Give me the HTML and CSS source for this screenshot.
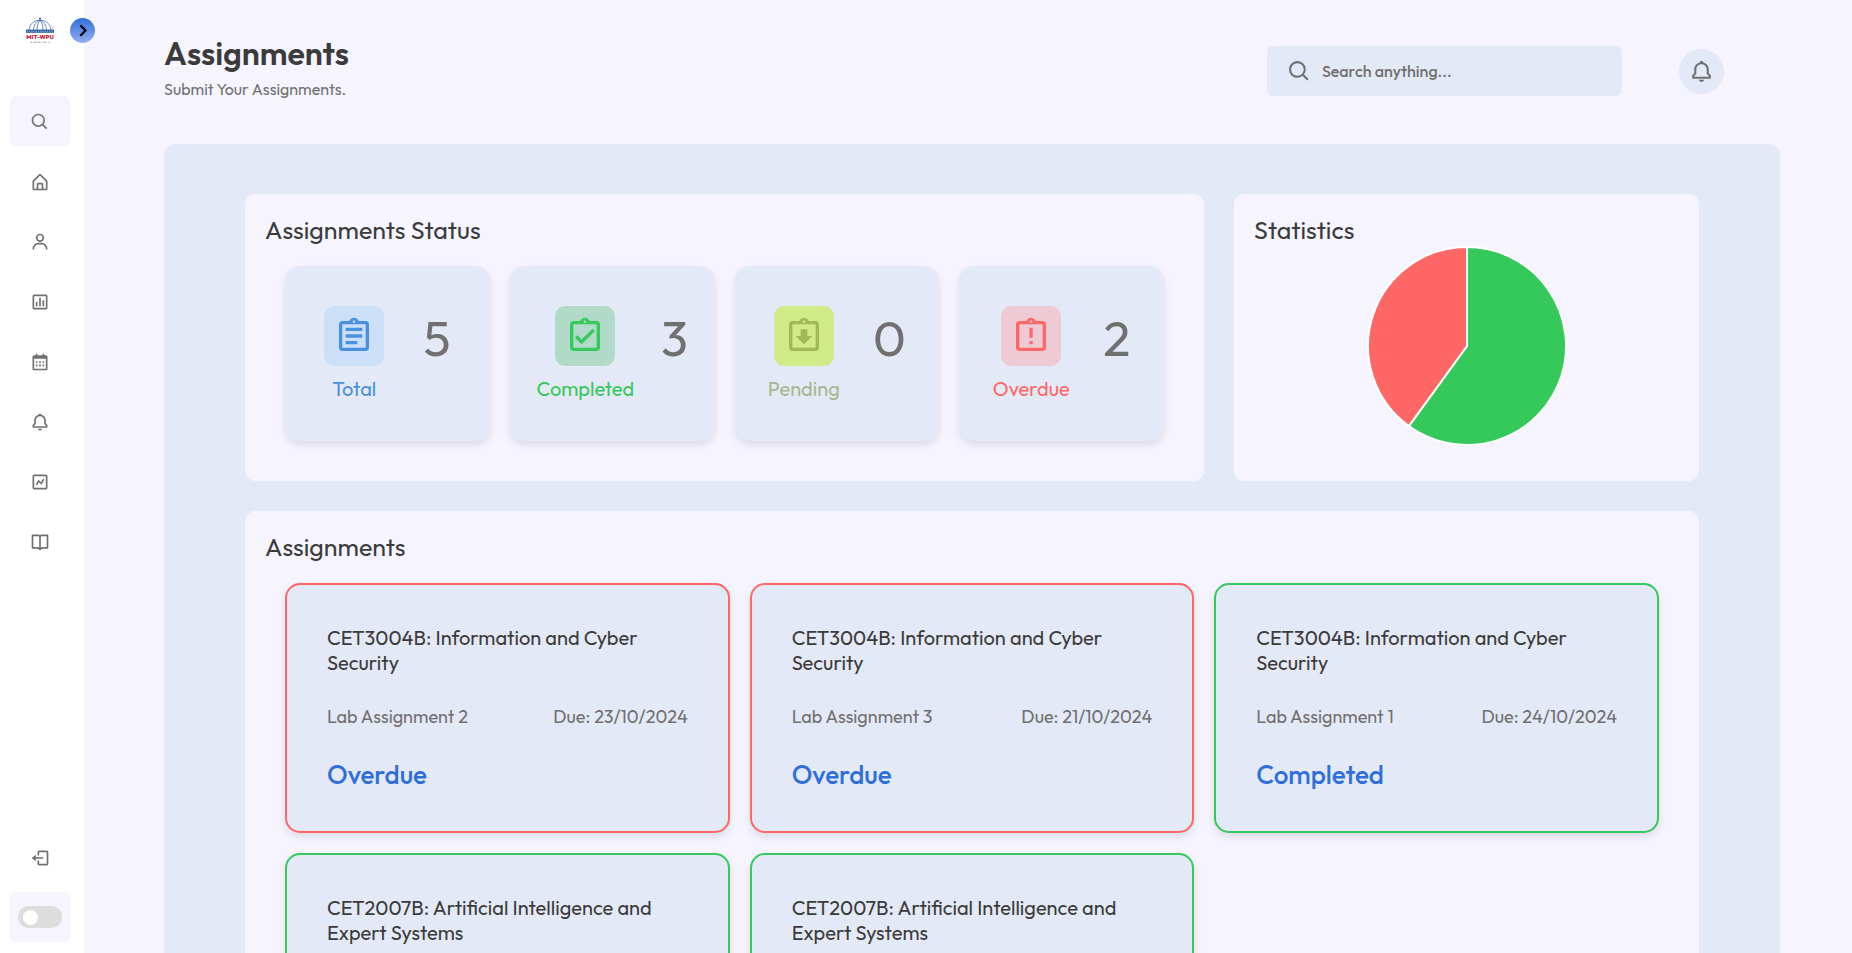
FILE: index.html
```html
<!DOCTYPE html>
<html lang="en">
<head>
<meta charset="utf-8">
<title>Assignments</title>
<link rel="stylesheet" href="styles.css">
</head>
<body>
<svg class="sprite" aria-hidden="true">
  <symbol id="search" viewBox="0 0 24 24"><path d="M10 18a7.952 7.952 0 0 0 4.897-1.688l4.396 4.396 1.414-1.414-4.396-4.396A7.952 7.952 0 0 0 18 10c0-4.411-3.589-8-8-8s-8 3.589-8 8 3.589 8 8 8zm0-14c3.309 0 6 2.691 6 6s-2.691 6-6 6-6-2.691-6-6 2.691-6 6-6z"/></symbol>
  <symbol id="home" viewBox="0 0 24 24"><path d="M5 22h14a2 2 0 0 0 2-2v-9a1 1 0 0 0-.29-.71l-8-8a1 1 0 0 0-1.41 0l-8 8A1 1 0 0 0 3 11v9a2 2 0 0 0 2 2zm5-2v-5h4v5zm-5-8.59 7-7 7 7V20h-3v-5a2 2 0 0 0-2-2h-4a2 2 0 0 0-2 2v5H5z"/></symbol>
  <symbol id="user" viewBox="0 0 24 24"><path d="M12 2a5 5 0 1 0 5 5 5 5 0 0 0-5-5zm0 8a3 3 0 1 1 3-3 3 3 0 0 1-3 3zm9 11v-1a7 7 0 0 0-7-7h-4a7 7 0 0 0-7 7v1h2v-1a5 5 0 0 1 5-5h4a5 5 0 0 1 5 5v1z"/></symbol>
  <symbol id="bars" viewBox="0 0 24 24"><path d="M5 3a2 2 0 0 0-2 2v14a2 2 0 0 0 2 2h14a2 2 0 0 0 2-2V5a2 2 0 0 0-2-2zm0 2h14v14H5zM7 12h2v5H7zM11 7h2v10h-2zM15 10h2v7h-2z" fill-rule="evenodd"/></symbol>
  <symbol id="calendar" viewBox="0 0 24 24"><path d="M7 11h2v2H7zm0 4h2v2H7zm4-4h2v2h-2zm0 4h2v2h-2zm4-4h2v2h-2zm0 4h2v2h-2z"/><path d="M5 22h14c1.103 0 2-.897 2-2V6c0-1.103-.897-2-2-2h-2V2h-2v2H9V2H7v2H5c-1.103 0-2 .897-2 2v14c0 1.103.897 2 2 2zM19 8l.001 12H5V8h14z"/></symbol>
  <symbol id="bell" viewBox="0 0 24 24"><path d="M19 13.586V10c0-3.217-2.185-5.927-5.145-6.742C13.562 2.52 12.846 2 12 2s-1.562.52-1.855 1.258C7.185 4.074 5 6.783 5 10v3.586l-1.707 1.707A.996.996 0 0 0 3 16v2a1 1 0 0 0 1 1h16a1 1 0 0 0 1-1v-2a.996.996 0 0 0-.293-.707L19 13.586zM19 17H5v-.586l1.707-1.707A.996.996 0 0 0 7 14v-4c0-2.757 2.243-5 5-5s5 2.243 5 5v4c0 .266.105.52.293.707L19 16.414V17zm-7 5a2.98 2.98 0 0 0 2.818-2H9.182A2.98 2.98 0 0 0 12 22z"/></symbol>
  <symbol id="trend" viewBox="0 0 24 24"><path d="M5 3a2 2 0 0 0-2 2v14a2 2 0 0 0 2 2h14a2 2 0 0 0 2-2V5a2 2 0 0 0-2-2zm0 2h14v14H5z" fill-rule="evenodd"/><path d="M7.700 15.400 10.300 10.800l3.300 3 2.800-5.200" fill="none" stroke="currentColor" stroke-width="2"/></symbol>
  <symbol id="book" viewBox="0 0 24 24"><path d="M21 3h-7a2.98 2.98 0 0 0-2 .78A2.98 2.98 0 0 0 10 3H3a1 1 0 0 0-1 1v15a1 1 0 0 0 1 1h5.758c.526 0 1.042.214 1.414.586l1.121 1.121a1 1 0 0 0 1.414 0l1.121-1.121A2.015 2.015 0 0 1 15.242 20H21a1 1 0 0 0 1-1V4a1 1 0 0 0-1-1zM8.758 18H4V5h6a1 1 0 0 1 1 1v12.689A4.033 4.033 0 0 0 8.758 18zM20 18h-4.758c-.799 0-1.584.246-2.242.689V6a1 1 0 0 1 1-1h6z"/></symbol>
  <symbol id="logout" viewBox="0 0 24 24"><path d="M16 13v-2H7V8l-5 4 5 4v-3z"/><path d="M20 3h-9c-1.103 0-2 .897-2 2v4h2V5h9v14h-9v-4H9v4c0 1.103.897 2 2 2h9c1.103 0 2-.897 2-2V5c0-1.103-.897-2-2-2z"/></symbol>
  <symbol id="clipboard" viewBox="0 0 24 24"><path d="M19 3h-4.180C14.4 1.840 13.300 1 12 1c-1.300 0-2.400.84-2.820 2H5c-1.100 0-2 .9-2 2v14c0 1.100.9 2 2 2h14c1.100 0 2-.9 2-2V5c0-1.100-.9-2-2-2zm-7-.25c.41 0 .75.34.75.75s-.34.75-.75.75-.75-.34-.75-.75.340-.75.750-.75zM19 19H5V5h14v14z"/></symbol>
</svg>

<aside class="sidebar">
  <div class="brand">
    <svg class="logo" viewBox="0 0 28 27">
      <g fill="none" stroke="#3f6fb0" stroke-width=".8">
        <path d="M3 13C4 6.500 8 3.300 14 3.300S24 6.500 25 13M7.500 13c.3-5 2.800-8.500 6.500-9.700M20.500 13c-.3-5-2.800-8.500-6.500-9.700M11 13c0-4 1-7.500 3-9.700 2 2.200 3 5.700 3 9.700M14 .3V3.500"/>
      </g>
      <path d="M0 12.600h28v3.200H0z" fill="#2f5f9f"/>
      <path d="M1 14.300h26" stroke="#b9cce6" stroke-width=".8" stroke-dasharray="1.200 1"/>
      <circle cx="14" cy="1.800" r="1" fill="#3f6fb0"/>
      <circle cx="27" cy="10.500" r=".8" fill="none" stroke="#8fa9cc" stroke-width=".5"/>
      <text x=".3" y="22" class="logo-name" textLength="27.400" lengthAdjust="spacingAndGlyphs">MIT-WPU</text>
      <path d="M4.500 25.200h1.500M7 25.200h8.500M17 25.200h4M22.500 25.200h1.500" stroke="#999" stroke-width="1" stroke-dasharray="1.500 .5"/>
    </svg>
    <button class="expand" aria-label="Expand">
      <svg viewBox="0 0 25 25"><path d="m10.300 7.300 5.200 5.200-5.200 5.200" fill="none" stroke="#000" stroke-width="2.200"/></svg>
    </button>
  </div>
  <nav class="menu">
    <a class="item item-search"><svg><use href="#search"/></svg></a>
    <a class="item"><svg><use href="#home"/></svg></a>
    <a class="item"><svg><use href="#user"/></svg></a>
    <a class="item"><svg><use href="#bars"/></svg></a>
    <a class="item"><svg><use href="#calendar"/></svg></a>
    <a class="item"><svg><use href="#bell"/></svg></a>
    <a class="item"><svg><use href="#trend"/></svg></a>
    <a class="item"><svg><use href="#book"/></svg></a>
  </nav>
  <a class="item"><svg><use href="#logout"/></svg></a>
  <div class="mode"><span class="switch"><span class="knob"></span></span></div>
</aside>

<main class="main">
  <header class="header">
    <div class="heading">
      <h1>Assignments</h1>
      <p>Submit Your Assignments.</p>
    </div>
    <div class="search"><svg><use href="#search"/></svg><span>Search anything...</span></div>
    <button class="notify" aria-label="Notifications"><svg><use href="#bell"/></svg></button>
  </header>

  <div class="board">
    <section class="card status">
      <h2>Assignments Status</h2>
      <div class="tiles">
        <div class="tile total">
          <div class="kind"><span class="badge"><svg><use href="#clipboard"/><path transform="scale(1.6667)" d="M7 15h7v2H7zm0-4h10v2H7zm0-4h10v2H7z"/></svg></span><span class="label">Total</span></div>
          <span class="count">5</span>
        </div>
        <div class="tile completed">
          <div class="kind"><span class="badge"><svg><use href="#clipboard"/><path transform="scale(1.6667)" d="M18 9l-1.410-1.420L10 14.170l-2.590-2.580L6 13l4 4z"/></svg></span><span class="label">Completed</span></div>
          <span class="count">3</span>
        </div>
        <div class="tile pending">
          <div class="kind"><span class="badge"><svg><use href="#clipboard"/><path transform="scale(1.6667)" d="M10 8h4v4h3l-5 5-5-5h3z"/></svg></span><span class="label">Pending</span></div>
          <span class="count">0</span>
        </div>
        <div class="tile overdue">
          <div class="kind"><span class="badge"><svg><use href="#clipboard"/><path transform="scale(1.6667)" d="M11 7h2v6h-2zM11 15h2v2h-2z"/></svg></span><span class="label">Overdue</span></div>
          <span class="count">2</span>
        </div>
      </div>
    </section>

    <section class="card stats">
      <h2>Statistics</h2>
      <svg class="pie" viewBox="-100 -100 200 200">
        <g stroke="#fff" stroke-width="2">
          <path d="M0 0V-99A99 99 0 1 1 -58.190 80.090z" fill="#35c85b"/>
          <path d="M0 0-58.190 80.090A99 99 0 0 1 0-99z" fill="#ff6767"/>
        </g>
      </svg>
    </section>

    <section class="card list">
      <h2>Assignments</h2>
      <div class="grid">
        <article class="task late">
          <h3>CET3004B: Information and Cyber Security</h3>
          <div class="meta"><span>Lab Assignment 2</span><span>Due: 23/10/2024</span></div>
          <strong>Overdue</strong>
        </article>
        <article class="task late">
          <h3>CET3004B: Information and Cyber Security</h3>
          <div class="meta"><span>Lab Assignment 3</span><span>Due: 21/10/2024</span></div>
          <strong>Overdue</strong>
        </article>
        <article class="task done">
          <h3>CET3004B: Information and Cyber Security</h3>
          <div class="meta"><span>Lab Assignment 1</span><span>Due: 24/10/2024</span></div>
          <strong>Completed</strong>
        </article>
        <article class="task done">
          <h3>CET2007B: Artificial Intelligence and Expert Systems</h3>
        </article>
        <article class="task done">
          <h3>CET2007B: Artificial Intelligence and Expert Systems</h3>
        </article>
      </div>
    </section>
  </div>
</main>
</body>
</html>
```
FILE: styles.css
```css
* { box-sizing: border-box; margin: 0; padding: 0; }

body {
  display: flex;
  height: 100vh;
  overflow: hidden;
  background: #f6f5ff;
  color: #3b3b3b;
  font-family: Outfit, Lato, sans-serif;
  font-weight: 400;
}

svg { display: block; fill: currentColor; }
button { border: 0; }
.sprite { position: absolute; width: 0; height: 0; }

.sidebar {
  display: flex;
  flex-direction: column;
  flex: none;
  width: 84px;
  height: 100vh;
  padding: 17px 14px 11px 10px;
  background: #fff;
  color: #707070;
}
.brand { position: relative; height: 79px; }
.logo { width: 28px; height: 27px; margin-left: 16px; }
.logo-name { fill: #c8203c; font: 800 6px Outfit, sans-serif; }
.expand {
  position: absolute;
  top: .5px;
  left: 60px;
  width: 25px;
  height: 25px;
  border-radius: 50%;
  background: linear-gradient(#2f6fdb, #93aeef);
}
.menu { flex: 1; }
.item {
  display: grid;
  place-items: center;
  height: 50px;
  margin-top: 10px;
  padding-top: 1px;
  border-radius: 6px;
}
.item svg { width: 20px; height: 20px; }
.item-search { margin-top: 0; background: #f6f5ff; }
.mode {
  display: grid;
  place-items: center;
  height: 50px;
  margin-top: 10px;
  border-radius: 6px;
  background: #f6f5ff;
}
.switch {
  display: flex;
  align-items: center;
  width: 44px;
  height: 22px;
  padding: 0 5px;
  border-radius: 11px;
  background: #ddd;
}
.knob { width: 15px; height: 15px; border-radius: 50%; background: #fff; }

.main { display: flex; flex-direction: column; flex: 1; padding: 0 72px 0 80px; }
.header { display: flex; flex: none; align-items: flex-start; height: 144px; padding: 33px 56px 0 0; }
.heading { flex: 1; }
.heading h1 { font-size: 32px; font-weight: 600; line-height: 40px; }
.heading p { margin-top: 6px; color: #707070; font-size: 16px; line-height: 20px; }
.search {
  display: flex;
  align-items: center;
  gap: 10px;
  width: 355px;
  height: 50px;
  margin: 13px 57px 0 0;
  padding-left: 20px;
  border-radius: 6px;
  background: #e4e9f7;
  color: #707070;
  font-size: 16px;
  font-weight: 500;
}
.search svg { width: 25px; height: 25px; }
.notify {
  display: grid;
  place-items: center;
  width: 45px;
  height: 45px;
  margin-top: 16px;
  border-radius: 50%;
  background: #e4e9f7;
  color: #707070;
}
.notify svg { width: 25px; height: 25px; }

.board {
  display: grid;
  grid-template-columns: 959px 465px;
  grid-template-rows: 287px 1fr;
  gap: 30px;
  flex: 1;
  min-height: 0;
  padding: 50px 81px 0;
  border-radius: 10px 10px 0 0;
  background: #e4e9f7;
}
.card { min-height: 0; padding: 21px 20px; border-radius: 10px; background: #f6f5ff; }
.card h2 { font-size: 25px; font-weight: 400; line-height: 30px; }
.list { grid-column: span 2; border-radius: 10px 10px 0 0; }

.tiles { display: grid; grid-template-columns: repeat(4, 1fr); gap: 20px; padding: 21px 20px 0; }
.tile {
  display: flex;
  justify-content: space-evenly;
  height: 175px;
  padding-top: 40px;
  border-radius: 15px;
  background: #e4e9f7;
  box-shadow: 0 4px 8px rgba(0, 0, 0, .1);
}
.kind { display: flex; flex-direction: column; align-items: center; gap: 10px; }
.badge { display: grid; place-items: center; width: 60px; height: 60px; border-radius: 10px; }
.badge svg { width: 40px; height: 40px; }
.label { font-size: 20px; line-height: 25px; }
.count { color: #707070; font-size: 50px; line-height: 63px; }
.total .kind { color: #4a90e2; }
.total .badge { background: #cbe0f8; }
.completed .kind { color: #35c85b; }
.completed .badge { background: #b1dbc8; }
.pending .badge { background: #d0eb87; color: #a3b858; }
.pending .label { color: #a8b78d; }
.overdue .kind { color: #ff6767; }
.overdue .badge { background: #eecbd4; }

.pie { width: 200px; height: 200px; margin: 1px auto 0; }

.grid { display: grid; grid-template-columns: repeat(3, 1fr); gap: 20px; padding: 21px 20px 0; }
.task {
  height: 250px;
  padding: 40px;
  border: 2px solid;
  border-radius: 15px;
  background: #e4e9f7;
  box-shadow: 0 4px 8px rgba(0, 0, 0, .1);
}
.late { border-color: #ff6767; }
.done { border-color: #35c85b; }
.task h3 { font-size: 20px; font-weight: 400; line-height: 25px; }
.meta {
  display: flex;
  justify-content: space-between;
  margin: 30px 0;
  color: #707070;
  font-size: 18px;
  line-height: 23px;
}
.task strong { display: block; color: #2f6fdb; font-size: 26px; font-weight: 500; line-height: 33px; }
```
